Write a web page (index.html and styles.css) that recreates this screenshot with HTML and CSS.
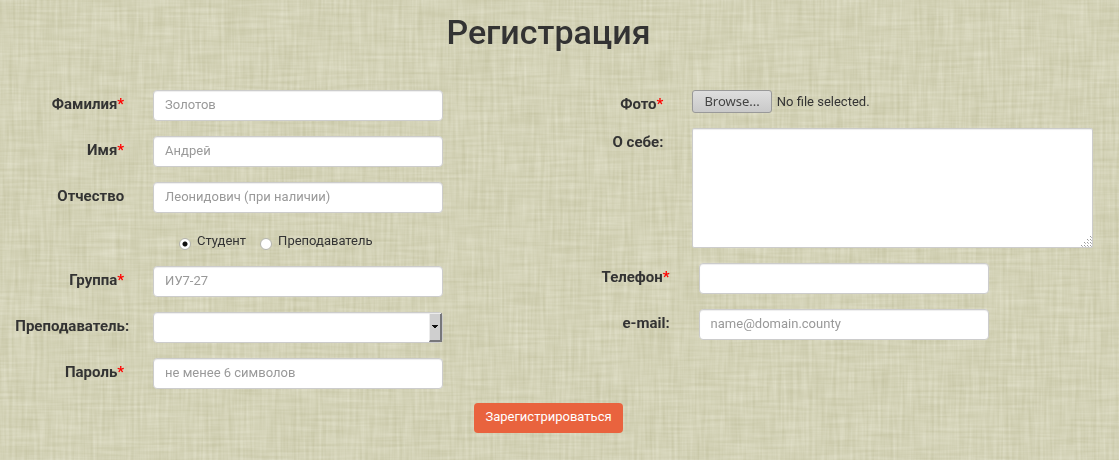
FILE: index.html
```html
<!DOCTYPE html>
<html lang="ru">
<head>
<meta charset="utf-8">
<meta name="viewport" content="width=device-width, initial-scale=1">
<title>Регистрация</title>
<link rel="stylesheet" href="styles.css">
</head>
<body>
<svg class="linen" aria-hidden="true">
  <filter id="weft" x="0" y="0" width="100%" height="100%" color-interpolation-filters="sRGB">
    <feTurbulence type="fractalNoise" baseFrequency="0.022 0.32" numOctaves="2" seed="4"/>
    <feColorMatrix values="0.16 0 0 0 0.75  0.16 0 0 0 0.745  0.22 0 0 0 0.607  0 0 0 0 1"/>
  </filter>
  <filter id="warp" x="0" y="0" width="100%" height="100%" color-interpolation-filters="sRGB">
    <feTurbulence type="fractalNoise" baseFrequency="0.32 0.022" numOctaves="2" seed="9"/>
    <feColorMatrix values="0.16 0 0 0 0.75  0.16 0 0 0 0.745  0.22 0 0 0 0.607  0 0 0 0 1"/>
  </filter>
  <rect width="100%" height="100%" filter="url(#weft)"/>
  <rect width="100%" height="100%" filter="url(#warp)" opacity="0.5"/>
</svg>
<main class="page">
  <h1 class="title">Регистрация</h1>
  <form class="form">
    <div class="columns">
      <div class="column">
        <div class="row">
          <label class="label" for="surname">Фамилия<span class="required">*</span></label>
          <input class="field" id="surname" type="text" placeholder="Золотов">
        </div>
        <div class="row">
          <label class="label" for="name">Имя<span class="required">*</span></label>
          <input class="field" id="name" type="text" placeholder="Андрей">
        </div>
        <div class="row">
          <label class="label" for="patronymic">Отчество</label>
          <input class="field" id="patronymic" type="text" placeholder="Леонидович (при наличии)">
        </div>
        <div class="roles">
          <label class="role"><input class="radio" type="radio" name="role" checked>Студент</label>
          <label class="role"><input class="radio" type="radio" name="role">Преподаватель</label>
        </div>
        <div class="row">
          <label class="label" for="group">Группа<span class="required">*</span></label>
          <input class="field" id="group" type="text" placeholder="ИУ7-27">
        </div>
        <div class="row row-teacher">
          <label class="label" for="teacher">Преподаватель:</label>
          <div class="select-box">
            <select class="field select" id="teacher"><option></option></select>
            <svg class="arrow" viewBox="0 0 13 29" preserveAspectRatio="none" aria-hidden="true">
              <path fill="#cfcfcf" d="M0 0h13v29H0z"/>
              <path fill="#77777b" d="M11 1l2-1v29H0l1-2h10z"/>
              <path fill="#ececec" d="M0 0h12v1H1v26l-1 1z"/>
              <path fill="#111" d="M3 12h6v1H8v1H7v1H5v-1H4v-1H3z"/>
            </svg>
          </div>
        </div>
        <div class="row">
          <label class="label" for="password">Пароль<span class="required">*</span></label>
          <input class="field" id="password" type="password" placeholder="не менее 6 символов">
        </div>
      </div>
      <div class="column">
        <div class="row row-wide row-photo">
          <label class="label" for="photo">Фото<span class="required">*</span></label>
          <div class="file">
            <input class="file-input" id="photo" type="file">
            <label class="browse" for="photo">Browse...</label>
            <span>No file selected.</span>
          </div>
        </div>
        <div class="row row-wide">
          <label class="label" for="about">О себе:</label>
          <div class="about-box">
            <textarea class="field about" id="about"></textarea>
            <svg class="grip" viewBox="0 0 11 11" aria-hidden="true">
              <path fill="none" stroke="#999" stroke-dasharray="1 2" d="M9 .5h1M6 3.5h4M3 6.5h7M0 9.5h10"/>
              <path fill="none" stroke="#bbb" stroke-dasharray="1 2" d="M10 1.5h1M7 4.5h4M4 7.5h7M1 10.5h10"/>
            </svg>
          </div>
        </div>
        <div class="row row-contact">
          <label class="label" for="phone">Телефон<span class="required">*</span></label>
          <input class="field" id="phone" type="tel">
        </div>
        <div class="row row-contact">
          <label class="label" for="email">e-mail:</label>
          <input class="field" id="email" type="email" placeholder="name@domain.county">
        </div>
      </div>
    </div>
    <button class="submit" type="submit">Зарегистрироваться</button>
  </form>
</main>
</body>
</html>
```
FILE: styles.css
```css
* {
  box-sizing: border-box;
}

body {
  margin: 0;
  background: #d5d2b7;
  color: #333;
  font: 13px/20px Roboto, "Open Sans", sans-serif;
}

.linen {
  position: fixed;
  inset: 0;
  width: 100%;
  height: 100%;
  z-index: -1;
}

.page {
  padding: 12px 0 27px;
}

.title {
  margin: 0 0 38px;
  padding-right: 22px;
  font-size: 34px;
  line-height: 40px;
  font-weight: 500;
  text-align: center;
}

.form {
  display: flex;
  flex-direction: column;
}

.columns {
  display: grid;
  grid-template-columns: 1fr 1fr;
}

.column {
  display: flex;
  flex-direction: column;
  gap: 15px;
}

.row {
  display: grid;
  grid-template-columns: 124fr 290fr 87fr;
  column-gap: 29px;
  align-items: start;
}

.row-teacher {
  grid-template-columns: 129fr 290fr 92fr;
  column-gap: 24px;
}

.row-wide {
  grid-template-columns: 104fr 401fr;
  padding-right: 26px;
}

.row-contact {
  grid-template-columns: 110fr 290fr 101fr;
}

.row-photo {
  margin-bottom: -5px;
}

.label {
  font-size: 15px;
  font-weight: 700;
  line-height: 28px;
  text-align: right;
  white-space: nowrap;
  justify-self: end;
}

.required {
  color: #f00;
}

.field {
  display: block;
  width: 100%;
  min-width: 0;
  height: 31px;
  margin: 0;
  padding: 4px 11px 6px;
  border: 1px solid #ccc;
  border-radius: 4px;
  background: #fff;
  color: #333;
  font: inherit;
  box-shadow: inset 0 1px 1px rgba(0, 0, 0, 0.07);
}

.field::placeholder {
  color: #999;
  opacity: 1;
}

.roles {
  display: flex;
  gap: 14px;
  height: 23px;
  padding: 2px 0 0 32%;
  align-items: center;
}

.role {
  display: flex;
  align-items: center;
  gap: 6px;
  line-height: 20px;
}

.radio {
  appearance: none;
  width: 12px;
  height: 12px;
  margin: 6px 0 0;
  border: 1px solid #b4b4ae;
  border-radius: 50%;
  background: #fff;
}

.radio:checked {
  background: radial-gradient(circle, #111 0 2px, #fff 3px);
}

.select-box,
.about-box {
  position: relative;
}

.select {
  appearance: none;
}

.arrow {
  position: absolute;
  top: 1px;
  right: 1px;
  width: 13px;
  height: 29px;
  pointer-events: none;
}

.file {
  display: flex;
  align-items: center;
  gap: 5px;
  height: 23px;
  position: relative;
}

.file-input {
  position: absolute;
  width: 80px;
  height: 23px;
  opacity: 0;
}

.browse {
  padding: 0 11px;
  border: 1px solid #999;
  border-radius: 3px;
  background: linear-gradient(#dedede, #c9c9c9);
  color: #444;
  font: 13px/21px "Noto Sans", sans-serif;
}

.about {
  height: 120px;
  border-radius: 2px;
  resize: vertical;
}

.about::-webkit-resizer {
  background: transparent;
}

.grip {
  position: absolute;
  right: 1px;
  bottom: 1px;
  width: 11px;
  height: 11px;
  pointer-events: none;
}

.submit {
  align-self: center;
  margin: 14px 22px 0 0;
  padding: 4px 11px 6px;
  border: 0;
  border-radius: 4px;
  background: #e9633e;
  color: #fff;
  font: inherit;
}
```
